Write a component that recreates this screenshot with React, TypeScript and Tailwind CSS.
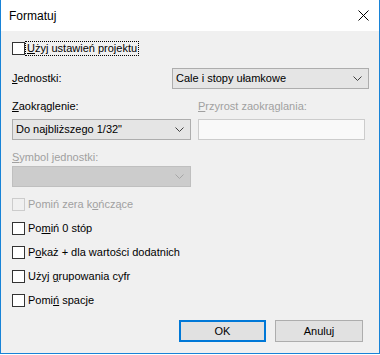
import React from "react";

const FONT = { fontFamily: '"Segoe UI", "Liberation Sans", Arial, sans-serif' };

function Chevron({ disabled }: { disabled?: boolean }) {
  return (
    <svg width="9" height="5" viewBox="0 0 9 5" className="shrink-0">
      <path
        d="M0.5 0.5 L4.5 4.5 L8.5 0.5"
        fill="none"
        stroke={disabled ? "#a6a6a6" : "#404040"}
        strokeWidth="1"
      />
    </svg>
  );
}

function Combo({ text, width, disabled }: { text?: string; width: string; disabled?: boolean }) {
  return (
    <div
      className={`${width} h-[21px] flex items-center justify-between pl-[3px] pr-[6px] border ${
        disabled ? "bg-[#cccccc] border-[#bfbfbf]" : "bg-[#e5e5e5] border-[#adadad]"
      }`}
    >
      <span className="text-[11px] leading-[15px] text-black">{text}</span>
      <Chevron disabled={disabled} />
    </div>
  );
}

function Box({ disabled }: { disabled?: boolean }) {
  return (
    <div
      className={`w-[13px] h-[13px] shrink-0 border ${
        disabled ? "border-[#cccccc] bg-[#f0f0f0]" : "border-[#333333] bg-white"
      }`}
    />
  );
}

function Check({ children, disabled }: { children: React.ReactNode; disabled?: boolean }) {
  return (
    <div className="h-[13px] flex items-center">
      <Box disabled={disabled} />
      <span
        className={`ml-[3px] text-[11px] leading-[15px] ${disabled ? "text-[#a0a0a0]" : "text-black"}`}
      >
        {children}
      </span>
    </div>
  );
}

export default function App() {
  return (
    <div className="w-[380px] h-[355px] bg-white" style={FONT}>
      <div className="w-[380px] h-[354px] flex flex-col border-x border-b border-[#1883d7] bg-[#f0f0f0]">
        {/* pasek tytułu */}
        <div className="h-[31px] bg-white flex items-center justify-between pl-[8px] pr-[10px]">
          <span className="text-[12px] text-black">Formatuj</span>
          <svg width="11" height="11" viewBox="0 0 11 11">
            <path d="M0.5 0.5 L10.5 10.5 M10.5 0.5 L0.5 10.5" stroke="#000" strokeWidth="1" />
          </svg>
        </div>

        <div className="flex-1 flex flex-col pl-[11px] pt-[10px]">
          {/* Użyj ustawień projektu */}
          <div className="h-[15px] flex items-center">
            <Box />
            <span className="ml-[1px] px-[1px] text-[11px] leading-[13px] text-black outline outline-1 outline-dotted outline-[#000]">
              <u>U</u>żyj ustawień projektu
            </span>
          </div>

          <div className="mt-[12px] flex items-center">
            <span className="w-[160px] text-[11px] leading-[15px] text-black">
              <u>J</u>ednostki:
            </span>
            <Combo text="Cale i stopy ułamkowe" width="w-[197px]" />
          </div>

          <div className="mt-[10px] flex">
            <span className="w-[186px] text-[11px] leading-[15px] text-black">
              <u>Z</u>aokrąglenie:
            </span>
            <span className="text-[11px] leading-[15px] text-[#a0a0a0]">
              <u>P</u>rzyrost zaokrąglania:
            </span>
          </div>

          <div className="mt-[5px] flex">
            <Combo text={"Do najbliższego 1/32\""} width="w-[179px]" />
            <div className="ml-[7px] w-[167px] h-[21px] border border-[#cccccc] bg-[#f9f9f9]" />
          </div>

          <span className="mt-[10px] text-[11px] leading-[15px] text-[#a0a0a0]">
            <u>S</u>ymbol jednostki:
          </span>
          <div className="mt-[1px]">
            <Combo width="w-[179px]" disabled />
          </div>

          <div className="mt-[11px] flex flex-col gap-[11px]">
            <Check disabled>
              Pomiń zera k<u>o</u>ńczące
            </Check>
            <Check>
              Po<u>m</u>iń 0 stóp
            </Check>
            <Check>
              P<u>o</u>każ + dla wartości dodatnich
            </Check>
            <Check>
              Użyj <u>g</u>rupowania cyfr
            </Check>
            <Check>
              Pomi<u>ń</u> spacje
            </Check>
          </div>

          <div className="mt-[13px] flex justify-end gap-[9px] pr-[16px]">
            <button className="w-[87px] h-[22px] border-2 border-[#0078d7] bg-[#e1e1e1] text-[11px] text-black">
              OK
            </button>
            <button className="w-[88px] h-[22px] border border-[#adadad] bg-[#e1e1e1] text-[11px] text-black">
              Anuluj
            </button>
          </div>
        </div>
      </div>
    </div>
  );
}
